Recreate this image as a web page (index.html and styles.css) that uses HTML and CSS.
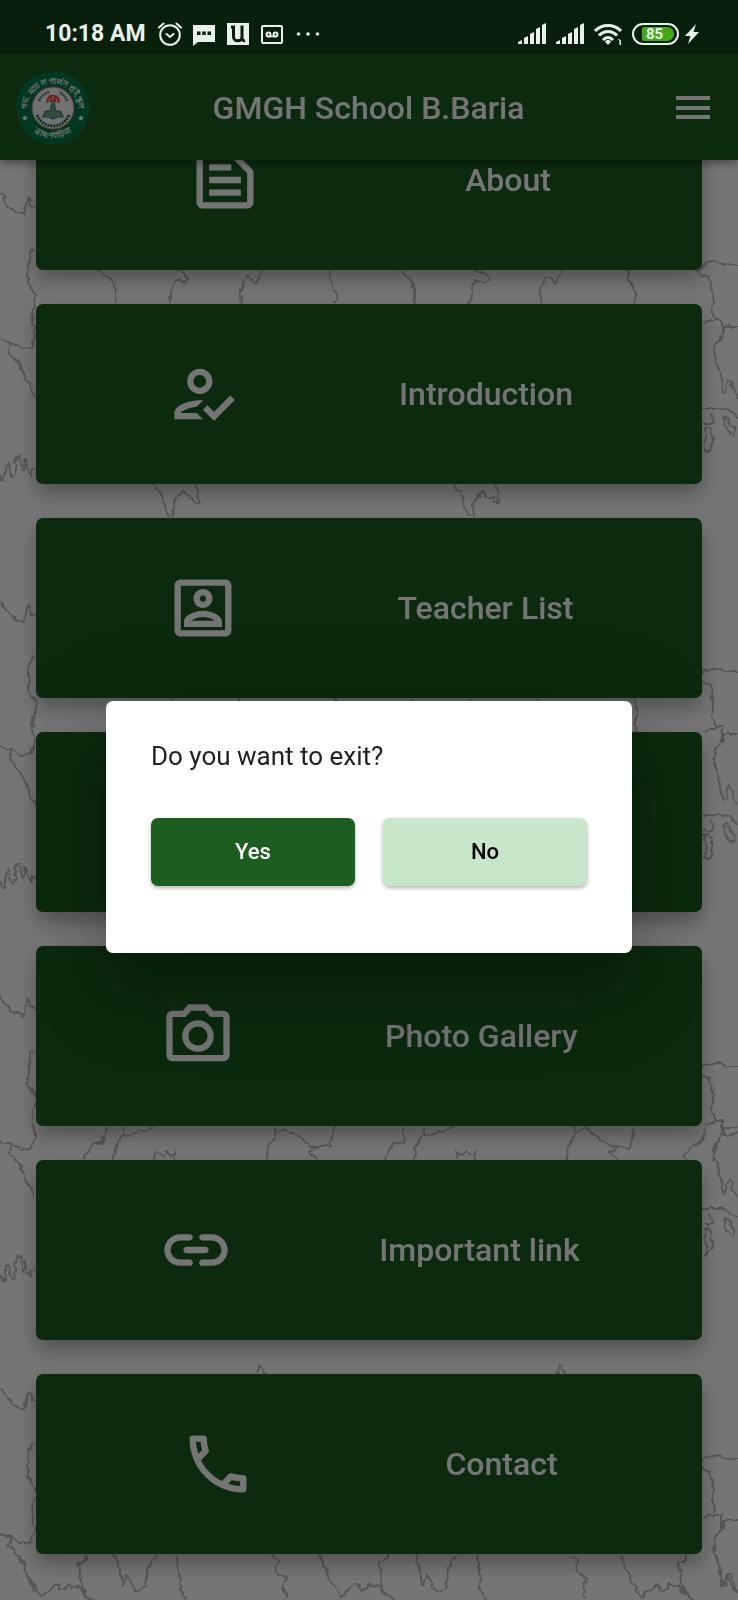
FILE: index.html
```html
<!DOCTYPE html>
<html lang="en">
<head>
<meta charset="utf-8">
<meta name="viewport" content="width=device-width, initial-scale=1">
<title>GMGH School B.Baria</title>
<link rel="stylesheet" href="styles.css">
</head>
<body>
<div class="app">
  <div class="status">
    <div class="status-group">
      <span class="clock">10:18 AM</span>
      <svg class="ic24" viewBox="0 0 24 24" fill="none" stroke="currentColor" stroke-width="2" stroke-linecap="round"><circle cx="12" cy="13" r="9.8"/><path d="M8.500 12l3.500 3 3.500-3M1 5.500l4.500-4M23 5.500l-4.500-4"/></svg>
      <svg class="ic24" viewBox="0 0 24 24"><path fill="currentColor" d="M1 3h22v17H6l-5 4z"/><path fill="#08200b" d="M5 9.500h3.500v3.500H5zM10.300 9.500h3.500v3.500h-3.500zM15.500 9.500H19v3.500h-3.500z"/></svg>
      <svg class="ic24" viewBox="0 0 24 24"><path fill="currentColor" d="M1 1h22v22H1z"/><path fill="none" stroke="#08200b" stroke-width="3" d="M5 5h2.500v10c0 5 8.500 5 8.500 0V3.500M16 4v12c0 2 1 3 3 2.500"/></svg>
      <svg class="ic24" viewBox="0 0 24 24" fill="none" stroke="currentColor" stroke-width="2"><rect x="2" y="4" width="20" height="17" rx="1"/><circle cx="8.500" cy="12.500" r="2"/><circle cx="15.500" cy="12.500" r="2"/><path d="M8 14.500h8" stroke-width="1.500"/></svg>
      <svg class="ic24 dots" viewBox="0 0 24 24" fill="currentColor"><circle cx="2.500" cy="12" r="1.800"/><circle cx="12" cy="12" r="1.800"/><circle cx="21.500" cy="12" r="1.800"/></svg>
    </div>
    <div class="status-group">
      <svg class="signal" viewBox="0 0 28 22" fill="currentColor"><path d="M0 21v-2l4-2v4zM6 21v-6l4-2v8zM12 21V11l4-2v12zM18 21V6l4-2v17zM24 21V2l4-2v21z"/></svg>
      <svg class="signal" viewBox="0 0 28 22" fill="currentColor"><path d="M0 21v-2l4-2v4zM6 21v-6l4-2v8zM12 21V11l4-2v12zM18 21V6l4-2v17zM24 21V2l4-2v21z"/></svg>
      <svg class="signal" viewBox="0 0 28 22" fill="none" stroke="currentColor" stroke-width="3"><path d="M1 8c7-7.500 19-7.500 26 0M5 12.500c5-5.500 13-5.500 18 0M9 17c3-3.500 7-3.500 10 0"/><path fill="currentColor" stroke="none" d="M11 18.500c1.500-2 4.500-2 6 0l-3 3.500zM24 16h1l2 1.500V22h-1.500v-4z"/></svg>
      <span class="battery"><span class="battery-level">85</span></span>
      <svg class="bolt" viewBox="0 0 14 20" fill="currentColor"><path d="M11 0L0 12h5.500L3 20 14 8H8.500z"/></svg>
    </div>
  </div>

  <header class="bar">
    <svg class="logo" viewBox="0 0 76 76" role="img" aria-label="School emblem">
      <defs><path id="arc-top" d="M14 50a26 26 0 1 1 48 0"/><path id="arc-bottom" d="M9 46a30 30 0 0 0 58 0"/></defs>
      <circle cx="38" cy="38" r="37" fill="#007a4b" stroke="#3a5a20" stroke-width="1"/>
      <circle cx="38" cy="38" r="21" fill="#f4f4ff" stroke="#e0705a" stroke-width="1"/>
      <text class="logo-text"><textPath href="#arc-top" startOffset="50%" text-anchor="middle">গভ. মডেল গার্লস হাই স্কুল</textPath></text>
      <text class="logo-text"><textPath href="#arc-bottom" startOffset="50%" text-anchor="middle">ব্রাহ্মণবাড়িয়া</textPath></text>
      <path fill="#fff" d="M10 45l.9 2 2.100.2-1.600 1.400.5 2.100-1.900-1.100-1.900 1.100.5-2.100L7 47.200l2.100-.2zM66 45l.9 2 2.100.2-1.600 1.400.5 2.100-1.900-1.100-1.900 1.100.5-2.100-1.600-1.400 2.100-.2z"/>
      <path fill="#e8402c" d="M31 33l1-5 3-3h6l3 3 1 5-4-1h-6z"/>
      <path fill="none" stroke="#f4f4ff" stroke-width="1" d="M34 32l1-4M38 31v-5M42 32l-1-4"/>
      <path fill="#6fa48a" stroke="#2b7a54" d="M36.500 33h3l1 8h5l3 6q-6-1-10.500 2-4.500-3-10.500-2l3-6h5z"/>
      <path fill="none" stroke="#17603c" stroke-width="3" stroke-dasharray="2 1" d="M22 45q5 11 16 11t16-11"/>
      <path fill="none" stroke="#5b8a72" stroke-width="3" stroke-dasharray="2 1" d="M24 31q3-7 10-9M52 31q-2-6-8-9"/>
    </svg>
    <h1 class="title">GMGH School B.Baria</h1>
    <button class="menu" type="button" aria-label="Menu"><svg viewBox="0 0 34 24"><path fill="currentColor" d="M0 0h34v4H0zM0 10h34v4H0zM0 19h34v4H0z"/></svg></button>
  </header>

  <main class="content">
    <svg class="map" viewBox="0 0 738 1440" preserveAspectRatio="xMidYMin slice" aria-hidden="true">
      <defs>
        <filter id="rough" x="0" y="0" width="100%" height="100%"><feTurbulence type="fractalNoise" baseFrequency="0.12" numOctaves="2" seed="4"/><feDisplacementMap in="SourceGraphic" scale="7" xChannelSelector="R" yChannelSelector="G"/></filter>
        <g id="side">
          <path d="M0-69q3 7 6 10t6 7l8 3 4 2 2-10 3-7 2 7 5 3M34-13q-6 8-6 16t0 15 8 15q-1 10-3 15t2 25l-4 13-11 1-8-6-12-3M11 81l-2 9 11 13 7 15 8 18M0 213q2 9 4 5l2-10q1-10 3-8l1 10q2 8 4 5l2-7-1-8q3-8 5-6l1 10q2 8 3 2l1-9q2 5 2 9t3 8l2-6 5-2"/>
          <path d="M703 2l9-2h6l9 3 11 0M703 2l-5 8 12 6 4 17-2 13 4 12 6 0v14l2-1v-6h14M704 62l6-3 6 0M722 74l-6 6-3 10 6 18q2 20 4 22t3-2l1-9q4-3 5 3l6 15M703 146h19q8 2 11 4t5 6M724 156q3-2 4 2l6 8q1 8 0 8t-4-2q-7-8-6-16zM705 165q5 0 6 3l2 10q-2 10-7 13zM703 160l6 2 4-2-3-8"/>
        </g>
        <g id="north"><path d="M98 7q2 6 12 9l5 12 0 14M174 7q13 4 14 9-2 5-3 4l-11-2-5 24M261 7q-2 12-5 13l-9-5q-8 12-7 16l2 11M328 7l1 11q7 9 7 12l-1 12"/></g>
        <g id="south"><path d="M153 221l2 5 7 5 2 14 6 10M174 255l-1-14 10-12 3 5 7 1 2 6h4l-1-11-3-9"/></g>
        <g id="middle"><path d="M106 64l-3 15-11 3-7 12 1 3M153 64l-14 4-2 3-14 1-5 7-5 18M123 64v8M155 97l1-8 6 4 5-5 4 4 4-3v8M274 64l2 6-8 15-1 12M276 70l9-5 9 7 19 12h16l6-20M318 85l-9 4 8 7"/></g>
        <g id="peak"><path d="M257 311l3-9 6 9"/></g>
        <g id="coast"><path d="M87 99v5l-8 2 2 21 6 14 7 3M115 99l6 15q0 18 2 15t4-10q6 13 9 15t10-2l2-20 9-13M177 99l4 35 5 9M272 99l7 5-4 12 13 6-6 9 5 12M20 99l9 22 12 20 14-12q4-2 4 2t3 3 4-2l4-4 3 3 5-2 8 12"/></g>
      </defs>
      <g class="map-lines" filter="url(#rough)">
        <use href="#side" y="102"/><use href="#north" y="102"/><use href="#north" x="300" y="102"/><use href="#south" y="102"/><use href="#south" x="300" y="102"/>
        <use href="#side" y="509"/><path d="M171 538v34M238 538v34M336 538v34M414 538v34M471 538v34M538 538v34M636 538v34"/>
        <use href="#side" y="903"/><use href="#middle" y="903"/><use href="#middle" x="300" y="903"/><use href="#middle" x="600" y="903"/><use href="#peak" y="903"/><use href="#peak" x="300" y="903"/>
        <use href="#side" y="1296"/><use href="#coast" y="1296"/><use href="#coast" x="300" y="1296"/><use href="#coast" x="600" y="1296"/>
      </g>
    </svg>
    <nav class="list" aria-label="Sections">
      <a class="card" href="#about"><svg class="icon" viewBox="0 0 24 24"><path d="M14.170 5L19 9.830V19H5V5h9.170m0-2H5c-1.100 0-2 .9-2 2v14c0 1.100.9 2 2 2h14c1.100 0 2-.9 2-2V9.830c0-.53-.21-1.040-.59-1.410l-4.830-4.830c-.37-.38-.88-.59-1.410-.59zM7 15h10v2H7v-2zm0-4h10v2H7v-2zm0-4h7v2H7V7z"/></svg><span>About</span></a>
      <a class="card" href="#introduction"><svg class="icon" viewBox="0 0 24 24"><path d="M11 12c2.210 0 4-1.790 4-4s-1.790-4-4-4-4 1.790-4 4 1.790 4 4 4zm0-6c1.100 0 2 .9 2 2s-.9 2-2 2-2-.9-2-2 .9-2 2-2zM5 18c.2-.63 2.570-1.680 4.960-1.940l2.040-2c-.39-.04-.68-.06-1-.06-2.670 0-8 1.340-8 4v2h9l-2-2H5zm15.600-5.500l-5.130 5.170-2.070-2.080L12 17l3.470 3.500L22 13.910z"/></svg><span>Introduction</span></a>
      <a class="card" href="#teachers"><svg class="icon" viewBox="0 0 24 24"><path d="M19 5v14H5V5h14m0-2H5c-1.100 0-2 .9-2 2v14c0 1.100.9 2 2 2h14c1.100 0 2-.9 2-2V5c0-1.100-.9-2-2-2zm-7 9c-1.650 0-3-1.350-3-3s1.350-3 3-3 3 1.350 3 3-1.350 3-3 3zm0-4c-.55 0-1 .45-1 1s.45 1 1 1 1-.45 1-1-.45-1-1-1zm6 10H6v-1.530c0-2.500 3.970-3.580 6-3.580s6 1.080 6 3.580V18zm-9.690-2h7.380c-.69-.56-2.380-1.120-3.690-1.120s-3.010.56-3.690 1.120z"/></svg><span>Teacher List</span></a>
      <div class="card"></div>
      <a class="card" href="#photos"><svg class="icon" viewBox="0 0 24 24"><path d="M14.120 4l1.830 2H20v12H4V6h4.050l1.830-2h4.240M15 2H9L7.170 4H4c-1.100 0-2 .9-2 2v12c0 1.100.9 2 2 2h16c1.100 0 2-.9 2-2V6c0-1.100-.9-2-2-2h-3.170L15 2zm-3 7c1.650 0 3 1.350 3 3s-1.350 3-3 3-3-1.350-3-3 1.350-3 3-3m0-2c-2.760 0-5 2.240-5 5s2.240 5 5 5 5-2.240 5-5-2.240-5-5-5z"/></svg><span>Photo Gallery</span></a>
      <a class="card" href="#links"><svg class="icon" viewBox="0 0 24 24"><path d="M17 7h-3c-.55 0-1 .45-1 1s.45 1 1 1h3c1.650 0 3 1.350 3 3s-1.350 3-3 3h-3c-.55 0-1 .45-1 1s.45 1 1 1h3c2.760 0 5-2.240 5-5s-2.240-5-5-5zm-9 5c0 .55.45 1 1 1h6c.55 0 1-.45 1-1s-.45-1-1-1H9c-.55 0-1 .45-1 1zm2 3H7c-1.650 0-3-1.350-3-3s1.350-3 3-3h3c.55 0 1-.45 1-1s-.45-1-1-1H7c-2.760 0-5 2.240-5 5s2.240 5 5 5h3c.55 0 1-.45 1-1s-.45-1-1-1z"/></svg><span>Important link</span></a>
      <a class="card" href="#contact"><svg class="icon" viewBox="0 0 24 24"><path d="M6.540 5c.06.89.21 1.760.45 2.590l-1.200 1.200c-.41-1.200-.67-2.470-.76-3.790h1.510m9.860 12.020c.85.24 1.720.39 2.600.45v1.490c-1.320-.09-2.590-.35-3.800-.75l1.200-1.190M7.500 3H4c-.55 0-1 .45-1 1 0 9.390 7.610 17 17 17 .55 0 1-.45 1-1v-3.490c0-.55-.45-1-1-1-1.240 0-2.450-.2-3.570-.57-.1-.04-.21-.05-.31-.05-.26 0-.51.1-.71.29l-2.200 2.200c-2.830-1.450-5.150-3.760-6.590-6.590l2.200-2.200c.28-.28.36-.67.25-1.020C8.700 6.450 8.500 5.250 8.500 4c0-.55-.45-1-1-1z"/></svg><span>Contact</span></a>
    </nav>
  </main>

  <div class="scrim">
    <div class="dialog" role="dialog" aria-modal="true" aria-labelledby="question">
      <p class="question" id="question">Do you want to exit?</p>
      <div class="actions">
        <button class="btn btn-yes" type="button">Yes</button>
        <button class="btn btn-no" type="button">No</button>
      </div>
    </div>
  </div>
</div>
</body>
</html>
```
FILE: styles.css
```css
* { box-sizing: border-box; }

body {
  margin: 0;
  font-family: Roboto, "Noto Sans", sans-serif;
  background: #757575;
}

.app {
  position: relative;
  display: flex;
  flex-direction: column;
  min-height: 100vh;
}

/* Status bar stays bright above the scrim */
.status {
  position: relative;
  z-index: 4;
  display: flex;
  justify-content: space-between;
  align-items: center;
  height: 55px;
  padding: 13px 39px 0 45px;
  background: #08200b;
  color: #e9f2ea;
}

.status-group {
  display: flex;
  align-items: center;
  gap: 10px;
}

.status-group svg { display: block; }

.clock {
  margin-right: 2px;
  font-size: 23px;
  font-weight: 700;
  line-height: 28px;
}

.ic24 { width: 24px; height: 24px; }
.dots { margin-left: 2px; }
.signal { width: 28px; height: 22px; }
.bolt { width: 14px; height: 20px; margin-left: -4px; }

.battery {
  width: 47px;
  height: 22px;
  padding: 2px 3px 2px 8px;
  border: 2px solid #e9f2ea;
  border-radius: 11px;
}

.battery-level {
  display: block;
  padding-left: 4px;
  border-radius: 2px 7px 7px 2px;
  background: #43a814;
  font-size: 15px;
  font-weight: 700;
  line-height: 14px;
}

.bar {
  position: relative;
  z-index: 2;
  display: grid;
  grid-template-columns: 76px 1fr 76px;
  align-items: center;
  height: 105px;
  padding: 0 28px 0 15px;
  background: #1b5e20;
  color: #fff;
  box-shadow: 0 4px 8px rgba(0, 0, 0, 0.35);
}

.logo { width: 76px; height: 76px; overflow: visible; }
.logo-text { font-size: 8px; font-weight: 700; fill: #fff; }

.title {
  margin: 0;
  padding-left: 12px;
  font-size: 32px;
  font-weight: 500;
  line-height: 40px;
  text-align: center;
}

.menu {
  justify-self: end;
  padding: 0;
  border: 0;
  background: none;
  color: #fff;
}

.menu svg { display: block; width: 34px; height: 24px; }

.content {
  position: relative;
  flex: 1;
  overflow: hidden;
  background: #fff;
}

.map {
  position: absolute;
  inset: 0;
  width: 100%;
  height: 100%;
}

.map-lines {
  fill: none;
  stroke: #bcbcbc;
  stroke-width: 2;
  stroke-linejoin: round;
}

/* The list is scrolled part of the way under the app bar */
.list {
  position: relative;
  display: grid;
  gap: 34px;
  margin-top: -70px;
  padding: 0 36px 45px;
}

.card {
  display: flex;
  justify-content: space-around;
  align-items: center;
  height: 180px;
  padding: 0 50px;
  border-radius: 7px;
  background: #1b5e20;
  color: #fff;
  font-size: 32px;
  font-weight: 500;
  line-height: 40px;
  text-decoration: none;
  box-shadow: 0 10px 20px rgba(0, 0, 0, 0.3);
}

.icon { width: 76px; height: 76px; fill: currentColor; }

.scrim {
  position: absolute;
  inset: 0;
  z-index: 3;
  display: flex;
  align-items: center;
  padding: 54px 106px 0;
  background: rgba(0, 0, 0, 0.54);
}

.dialog {
  flex: 1;
  padding: 39px 45px 67px;
  border-radius: 7px;
  background: #fff;
  box-shadow: 0 22px 30px -14px rgba(0, 0, 0, 0.2), 0 48px 76px 6px rgba(0, 0, 0, 0.14), 0 18px 92px 16px rgba(0, 0, 0, 0.12);
}

.question {
  margin: 0 0 46px;
  color: #212121;
  font-size: 26px;
  line-height: 32px;
}

.actions {
  display: grid;
  grid-template-columns: 1fr 1fr;
  gap: 28px;
}

.btn {
  height: 68px;
  padding: 0;
  border: 0;
  border-radius: 7px;
  font: 500 22px/28px Roboto, sans-serif;
  box-shadow: 0 2px 4px rgba(0, 0, 0, 0.3);
}

.btn-yes { background: #1b5e20; color: #fff; }
.btn-no { background: #c8e6c9; color: #000; }
```
